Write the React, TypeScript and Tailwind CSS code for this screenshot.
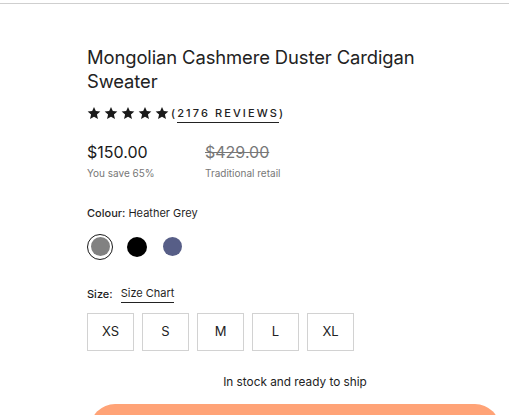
import React from "react";

const sizes = ["XS", "S", "M", "L", "XL"];

function Star() {
  return (
    <svg viewBox="0 0 24 24" className="h-[14px] w-[14px]" fill="#1a1a1a">
      <path d="M12 1.5l3.1 7.2 7.8.7-5.9 5.2 1.8 7.7L12 18.3l-6.8 4 1.8-7.7-5.9-5.2 7.8-.7z" />
    </svg>
  );
}

export default function App() {
  return (
    <div className="h-[415px] w-[509px] overflow-hidden bg-white font-['Inter',sans-serif] text-[#1f1f1f]">
      <div className="h-[4px] border-b border-[#cfcfcf]" />

      <div className="pl-[87px] pr-[6px] pt-[41px]">
        {/* Title */}
        <h1 className="text-[18.4px] font-normal leading-[24px] tracking-[-0.1px] text-[#222]">
          Mongolian Cashmere Duster Cardigan
          <br />
          Sweater
        </h1>

        {/* Rating */}
        <div className="mt-[12px] flex items-center">
          <div className="flex gap-[3px]">
            <Star />
            <Star />
            <Star />
            <Star />
            <Star />
          </div>
          <span className="ml-[2px] text-[11px] font-medium tracking-[2.1px] text-[#222]">
            (<span className="border-b border-[#222] pb-[2px]">2176 REVIEWS</span>)
          </span>
        </div>

        {/* Prices */}
        <div className="mt-[20px] flex">
          <div className="w-[118px]">
            <div className="text-[16px] leading-[20px] text-[#1a1a1a]">$150.00</div>
            <div className="mt-[5px] whitespace-nowrap text-[10px] leading-[12px] text-[#777]">You save 65%</div>
          </div>
          <div>
            <div className="text-[16px] leading-[20px] text-[#777] line-through">$429.00</div>
            <div className="mt-[5px] whitespace-nowrap text-[10px] leading-[12px] text-[#777]">Traditional retail</div>
          </div>
        </div>

        {/* Colour */}
        <div className="mt-[27px] text-[11px] leading-[14px]">
          <span className="font-medium">Colour:</span> Heather Grey
        </div>
        <div className="mt-[14px] flex items-center gap-[14px]">
          <div className="flex h-[26px] w-[26px] items-center justify-center rounded-full border-[1.5px] border-[#1a1a1a]">
            <div className="h-[19px] w-[19px] rounded-full bg-[#818181]" />
          </div>
          <div className="h-[20px] w-[20px] rounded-full bg-black" />
          <div className="ml-[2px] h-[19px] w-[19px] rounded-full bg-[#575e87]" />
        </div>

        {/* Size */}
        <div className="mt-[26px] flex items-center text-[11px] leading-[14px]">
          <span className="font-medium">Size:</span>
          <span className="ml-[8px] border-b border-[#222] pb-[2px]">Size Chart</span>
        </div>
        <div className="mt-[10px] flex gap-[8px]">
          {sizes.map((s) => (
            <div
              key={s}
              className="flex h-[38px] w-[47px] items-center justify-center border border-[#d2d2d2] text-[13px] text-[#222]"
            >
              {s}
            </div>
          ))}
        </div>

        {/* Stock */}
        <div className="mt-[23px] text-center text-[11.8px] leading-[16px] text-[#222]">
          In stock and ready to ship
        </div>

        <div className="ml-[3px] mr-[3px] mt-[14px] h-[50px] rounded-[26px] bg-[#ffa377]" />
      </div>
    </div>
  );
}
